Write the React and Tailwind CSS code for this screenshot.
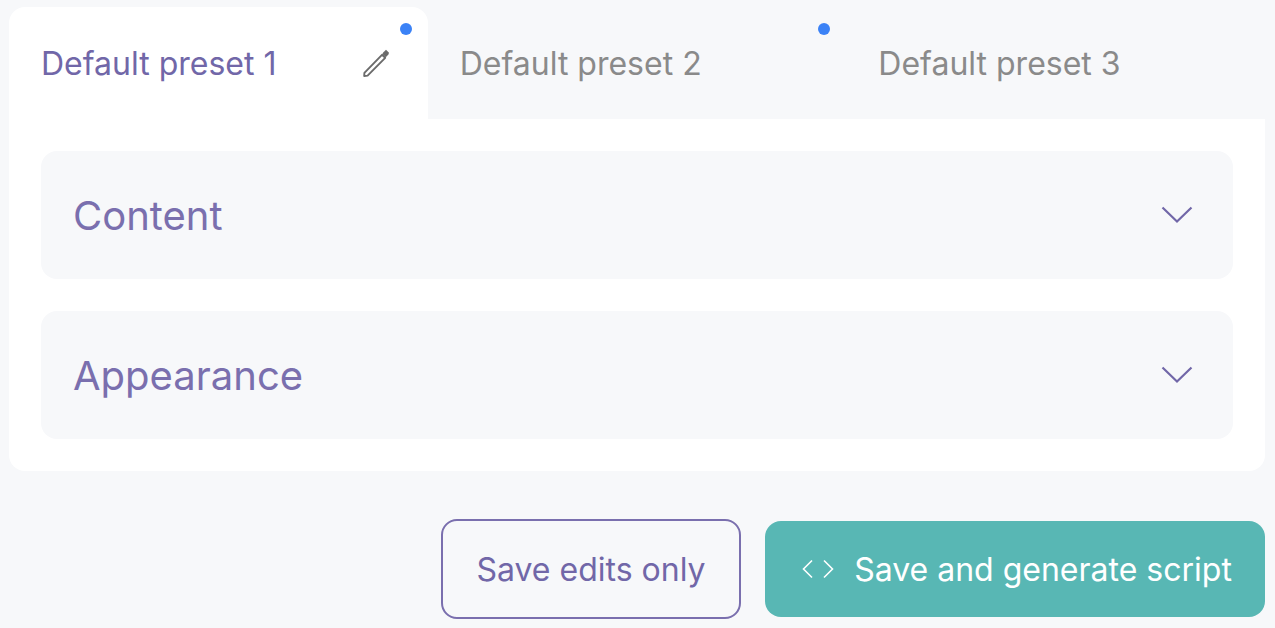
const tabs = [
  { label: "Default preset 1", active: true, dot: true },
  { label: "Default preset 2", dot: true },
  { label: "Default preset 3" },
];

const Pencil = () => (
  <svg className="-mt-px" width="30" height="30" viewBox="0 0 30 30" fill="none">
    <path d="M2.4 24.8 L20 6.8 L23.2 9.8 L5.6 27.6 L2.2 28 Z" stroke="#6b6b6b" strokeWidth="1.9" strokeLinejoin="round" />
    <path d="M21.2 4.4 L24 1.8 L27 4.8 L26.4 6.4 L23.8 9.2 L20.4 6 Z" fill="#6b6b6b" />
  </svg>
);

const Chevron = () => (
  <svg width="32" height="18" viewBox="0 0 32 18" fill="none">
    <path d="M1.5 1.5 L16 15.5 L30.5 1.5" stroke="#7167a8" strokeWidth="2.2" />
  </svg>
);

const Section = ({ title }) => (
  <div className="flex h-32 items-center justify-between rounded-2xl bg-[#f7f8fa] pl-[32px] pr-[40px]">
    <span className="mt-[2px] text-[40px] text-[#7a6fae]">{title}</span>
    <Chevron />
  </div>
);

export default function App() {
  return (
    <div className="h-[628px] overflow-hidden bg-[#f7f8fa] pt-[7px] pl-[9px] pr-[10px] font-['Inter',sans-serif]">
      <div className="flex">
        {tabs.map((tab) => (
          <div
            key={tab.label}
            className={`relative flex h-[112px] w-[419px] items-center justify-between rounded-t-2xl pt-[1px] pl-[32px] pr-[36px] ${tab.active ? "bg-white" : ""}`}
          >
            <span className={`text-[32px] ${tab.active ? "text-[#7167a8]" : "text-[#8a8a8a]"}`}>{tab.label}</span>
            {tab.active && <Pencil />}
            {tab.dot && <span className="absolute right-[16px] top-[16px] h-3 w-3 rounded-full bg-[#3b82f6]" />}
          </div>
        ))}
      </div>
      <div className="flex flex-col gap-8 rounded-b-2xl bg-white px-8 py-8">
        <Section title="Content" />
        <Section title="Appearance" />
      </div>
      <div className="mt-[48px] flex items-center justify-end gap-6">
        <button className="flex h-[100px] w-[300px] items-center justify-center rounded-2xl border-2 border-[#7a6fae] pt-[2px] text-[32px] text-[#7167a8]">
          Save edits only
        </button>
        <button className="flex h-[96px] w-[500px] items-center justify-center gap-[20px] rounded-2xl bg-[#58b7b4] pl-[4px] text-[32px] text-white">
          <svg width="32" height="20" viewBox="0 0 32 20" fill="none" stroke="#fff" strokeWidth="1.6">
            <path d="M10 1.5 L1.5 10 L10 18.5" />
            <path d="M22 1.5 L30.5 10 L22 18.5" />
          </svg>
          <span className="mt-[2px]">Save and generate script</span>
        </button>
      </div>
    </div>
  );
}
